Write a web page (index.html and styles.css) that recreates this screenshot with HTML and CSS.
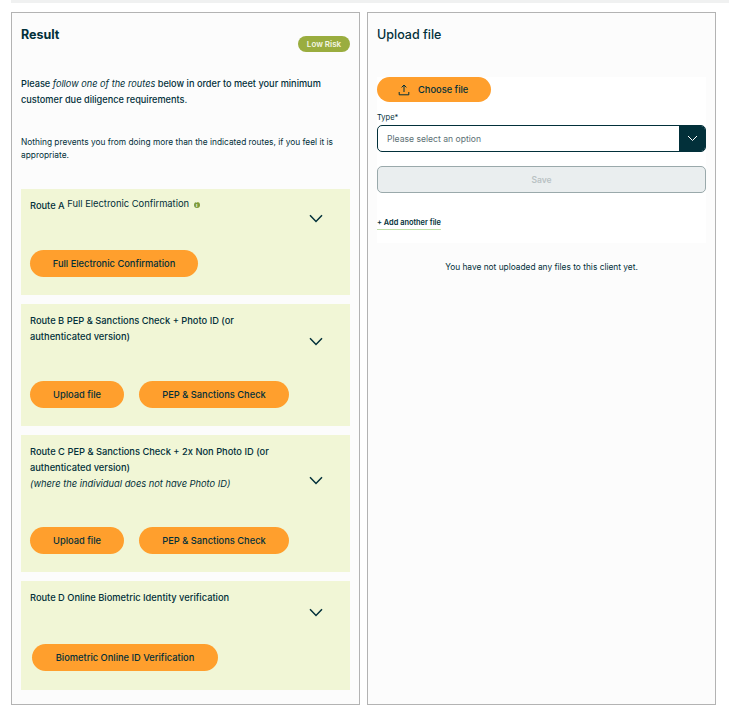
FILE: index.html
```html
<!DOCTYPE html>
<html>
<head>
	<title>Client result</title>
	<link rel="stylesheet" href="styles.css">
</head>
<body>

<div class="top-bar"></div>

<div class="columns">
	<div class="panel result">
		<div class="result-head">
			<h2>Result</h2>
			<span class="risk">Low Risk</span>
		</div>
		<p class="intro">Please <em>follow one of the routes</em> below in order to meet your minimum<br>customer due diligence requirements.</p>
		<p class="note">Nothing prevents you from doing more than the indicated routes, if you feel it is appropriate.</p>

		<div class="route route-a">
			<div class="route-head">
				<div class="route-title">Route A <span class="route-sub">Full Electronic Confirmation <i class="info">i</i></span></div>
				<svg class="chevron" width="14" height="9" viewBox="0 0 14 9"><path d="M1 1.2 7 7.4 13 1.2"/></svg>
			</div>
			<div class="actions">
				<button class="btn btn-full">Full Electronic Confirmation</button>
			</div>
		</div>

		<div class="route route-b">
			<div class="route-head">
				<div class="route-title">Route B PEP &amp; Sanctions Check + Photo ID (or authenticated version)</div>
				<svg class="chevron" width="14" height="9" viewBox="0 0 14 9"><path d="M1 1.2 7 7.4 13 1.2"/></svg>
			</div>
			<div class="actions">
				<button class="btn btn-upload">Upload file</button>
				<button class="btn btn-pep">PEP &amp; Sanctions Check</button>
			</div>
		</div>

		<div class="route route-c">
			<div class="route-head">
				<div class="route-title">Route C PEP &amp; Sanctions Check + 2x Non Photo ID (or authenticated version)<br><em>(where the individual does not have Photo ID)</em></div>
				<svg class="chevron" width="14" height="9" viewBox="0 0 14 9"><path d="M1 1.2 7 7.4 13 1.2"/></svg>
			</div>
			<div class="actions">
				<button class="btn btn-upload">Upload file</button>
				<button class="btn btn-pep">PEP &amp; Sanctions Check</button>
			</div>
		</div>

		<div class="route route-d">
			<div class="route-head">
				<div class="route-title">Route D Online Biometric Identity verification</div>
				<svg class="chevron" width="14" height="9" viewBox="0 0 14 9"><path d="M1 1.2 7 7.4 13 1.2"/></svg>
			</div>
			<div class="actions">
				<button class="btn btn-bio">Biometric Online ID Verification</button>
			</div>
		</div>
	</div>

	<div class="panel upload">
		<h2 class="upload-title">Upload file</h2>
		<div class="upload-form">
			<button class="btn btn-choose">
				<svg width="12" height="12" viewBox="0 0 12 12"><path d="M6 8V1.2M3.6 3.4 6 1l2.4 2.4M1.2 8v2.8h9.6V8"/></svg>
				Choose file
			</button>
			<label class="type-label">Type*</label>
			<div class="select">
				<span class="select-text">Please select an option</span>
				<span class="select-arrow">
					<svg width="11" height="7" viewBox="0 0 11 7"><path d="M1 1 5.5 5.5 10 1"/></svg>
				</span>
			</div>
			<button class="save" disabled>Save</button>
			<a class="add-file">+ Add another file</a>
		</div>
		<p class="empty">You have not uploaded any files to this client yet.</p>
	</div>
</div>

</body>
</html>
```

FILE: styles.css
```css
body {
	margin: 0;
	background: #fff;
	color: #02303a;
	font-family: Inter, "Liberation Sans", sans-serif;
	font-size: 9px;
}

h2 {
	margin: 0;
	font-size: 12.5px;
	font-weight: 500;
}

p {
	margin: 0;
}

button {
	font-family: inherit;
	border: 0;
}

.top-bar {
	height: 3px;
	margin-left: 11px;
	background: #f0f1f1;
}

.columns {
	display: flex;
	gap: 7px;
	margin: 9px 13px 0 11px;
}

.panel {
	box-sizing: border-box;
	width: 349px;
	height: 693px;
	border: 1px solid #b3b3b3;
	background: #fcfcfc;
}

.result {
	padding: 0 9px;
}

.result-head {
	display: flex;
	justify-content: space-between;
	height: 57px;
	padding-top: 14px;
	box-sizing: border-box;
}

.result-head h2 {
	font-weight: 700;
}

.risk {
	align-self: flex-start;
	margin-top: 9px;
	width: 52px;
	height: 16px;
	line-height: 16px;
	text-align: center;
	border-radius: 8px;
	background: #9aad3f;
	color: #f4f6e4;
	font-size: 8px;
	font-weight: 600;
}

.intro {
	margin-top: 6px;
	font-size: 9.2px;
	font-weight: 500;
	line-height: 16px;
}

.intro em {
	font-weight: 400;
}

.note {
	margin-top: 28px;
	font-size: 8.35px;
	line-height: 13px;
}

.route {
	box-sizing: border-box;
	margin-top: 9px;
	padding: 9px;
	background: #f1f6d6;
}

.route-a {
	margin-top: 27px;
	height: 106px;
}

.route-b {
	height: 122px;
}

.route-c {
	height: 137px;
}

.route-d {
	height: 109px;
}

.route-head {
	display: flex;
	align-items: flex-start;
	justify-content: space-between;
	padding-right: 18px;
}

.route-title {
	width: 252px;
	font-size: 9.3px;
	font-weight: 500;
	line-height: 16px;
}

.route-title em {
	font-weight: 400;
}

.route-sub {
	font-weight: 400;
	font-size: 9.4px;
	position: relative;
	top: -2px;
}

.info {
	display: inline-block;
	width: 6px;
	height: 6px;
	margin-left: 2px;
	border-radius: 50%;
	background: #7e9a3a;
	color: #fff;
	font-size: 5px;
	font-style: normal;
	font-weight: 700;
	line-height: 6px;
	text-align: center;
}

.chevron {
	fill: none;
	stroke: #02303a;
	stroke-width: 1.5;
}

.route-a .route-head {
	height: 52px;
}

.route-a .chevron {
	margin-top: 16px;
}

.route-b .route-head {
	height: 68px;
}

.route-b .chevron {
	margin-top: 24px;
}

.route-c .route-head {
	height: 83px;
}

.route-c .chevron {
	margin-top: 32px;
}

.route-d .route-head {
	height: 54px;
}

.route-d .chevron {
	margin-top: 18px;
}

.route-d .actions {
	padding-left: 2px;
}

.actions {
	display: flex;
	gap: 15px;
}

.btn {
	height: 27px;
	padding: 0;
	border-radius: 14px;
	background: #ff9f2d;
	color: #02303a;
	font-size: 9.3px;
	font-weight: 500;
}

.btn-full {
	width: 168px;
}

.btn-upload {
	width: 94px;
}

.btn-pep {
	width: 150px;
}

.btn-bio {
	width: 186px;
}

.upload {
	padding: 0 9px;
}

.upload-title {
	padding-top: 14px;
	height: 64px;
	box-sizing: border-box;
}

.upload-form {
	height: 166px;
	background: #fff;
}

.btn-choose {
	display: flex;
	align-items: center;
	gap: 8px;
	width: 114px;
	height: 25px;
	padding: 0 0 0 21px;
	border-radius: 13px;
}

.btn-choose svg {
	fill: none;
	stroke: #02303a;
	stroke-width: 1;
}

.type-label {
	display: block;
	margin-top: 10px;
	font-size: 7.5px;
	line-height: 12px;
}

.select {
	box-sizing: border-box;
	display: flex;
	align-items: center;
	justify-content: space-between;
	height: 27px;
	margin-top: 1px;
	border: 1px solid #02303a;
	border-radius: 5px;
	overflow: hidden;
}

.select-text {
	padding-left: 9px;
	color: #5c6f74;
	font-size: 8.6px;
}

.select-arrow {
	display: flex;
	align-items: center;
	justify-content: center;
	width: 26px;
	height: 100%;
	background: #02303a;
}

.select-arrow svg {
	fill: none;
	stroke: #fff;
	stroke-width: 1;
}

.save {
	display: block;
	box-sizing: border-box;
	width: 100%;
	height: 27px;
	margin-top: 14px;
	border: 1px solid #9aa9ab;
	border-radius: 5px;
	background: #eaeeef;
	color: #b9c2c4;
	font-size: 8.5px;
	font-weight: 600;
}

.add-file {
	display: inline-block;
	margin-top: 25px;
	padding-bottom: 2px;
	border-bottom: 1px solid #bfe0a8;
	font-size: 7.4px;
	font-weight: 600;
}

.empty {
	margin-top: 19px;
	text-align: center;
	font-size: 8.35px;
}
```
